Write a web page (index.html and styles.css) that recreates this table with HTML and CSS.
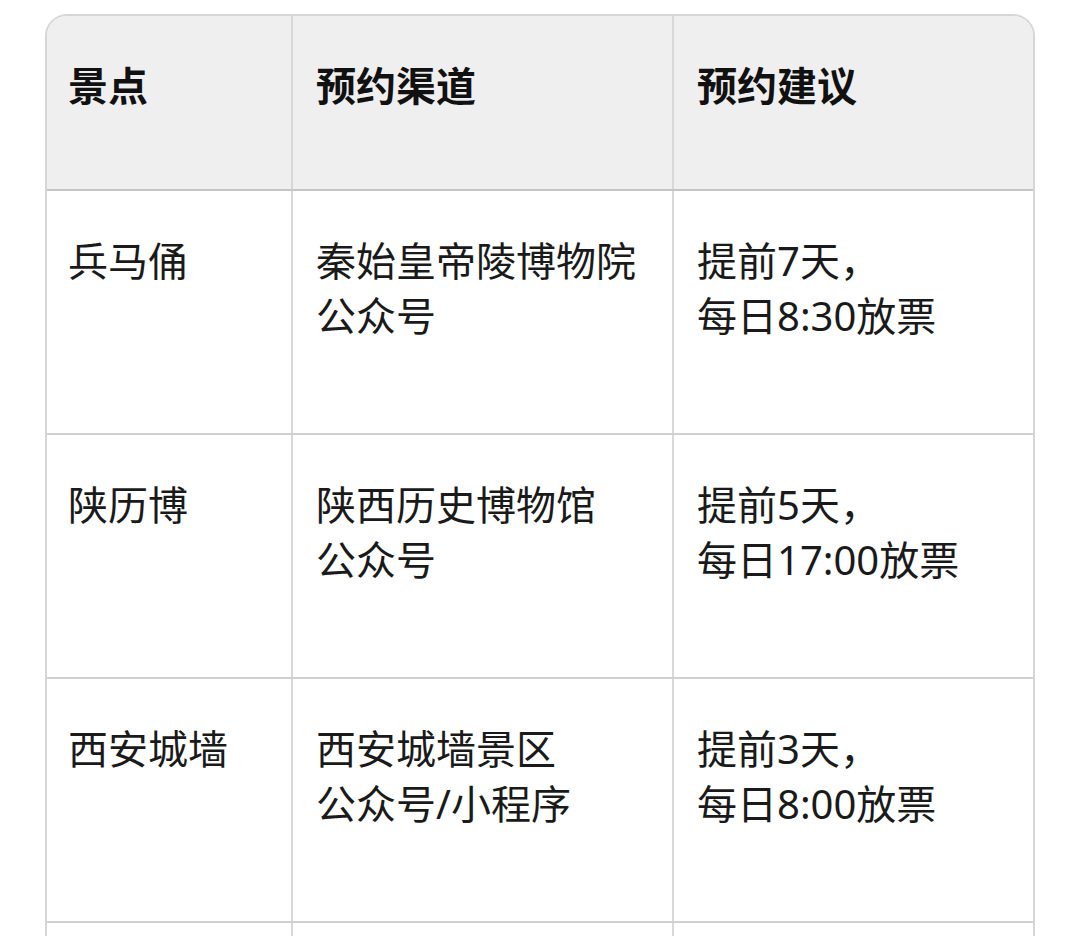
FILE: index.html
```html
<!DOCTYPE html>
<html lang="zh-CN">
<head>
<meta charset="utf-8">
<title>预约建议</title>
<link rel="stylesheet" href="styles.css">
</head>
<body>
<div class="card">
  <table class="tbl">
    <colgroup>
      <col class="c1">
      <col class="c2">
      <col class="c3">
    </colgroup>
    <thead>
      <tr class="head">
        <th>景点</th>
        <th>预约渠道</th>
        <th>预约建议</th>
      </tr>
    </thead>
    <tbody>
      <tr class="row">
        <td>兵马俑</td>
        <td>秦始皇帝陵博物院<br>公众号</td>
        <td>提前7天，<br>每日8:30放票</td>
      </tr>
      <tr class="row">
        <td>陕历博</td>
        <td>陕西历史博物馆<br>公众号</td>
        <td>提前5天，<br>每日17:00放票</td>
      </tr>
      <tr class="row">
        <td>西安城墙</td>
        <td>西安城墙景区<br>公众号/小程序</td>
        <td>提前3天，<br>每日8:00放票</td>
      </tr>
      <tr class="row">
        <td></td>
        <td></td>
        <td></td>
      </tr>
    </tbody>
  </table>
</div>
</body>
</html>
```
FILE: styles.css
```css
html, body {
  margin: 0;
  padding: 0;
  background: #ffffff;
}
body {
  font-family: "Noto Sans", "Noto Sans CJK SC", sans-serif;
  color: #1a1a1a;
  height: 936px;
  overflow: hidden;
}
.card {
  margin: 14px 0 0 45px;
  width: 990px;
  border: 2px solid #d6d6d6;
  border-bottom: none;
  border-radius: 22px 22px 0 0;
  overflow: hidden;
  box-sizing: border-box;
}
.tbl {
  width: 100%;
  border-collapse: collapse;
  table-layout: fixed;
}
.c1 { width: 245px; }
.c2 { width: 381px; }
.c3 { width: auto; }
.tbl th,
.tbl td {
  font-size: 40px;
  line-height: 55px;
  text-align: left;
  vertical-align: top;
  padding: 42px 10px 0 23px;
  border-left: 2px solid #d8d8d8;
}
.tbl th:first-child,
.tbl td:first-child {
  border-left: none;
  padding-left: 21px;
}
.head th {
  height: 131px;
  background: #efefef;
  font-weight: 700;
  color: #111;
  border-bottom: 2px solid #c4c4c4;
}
.row td {
  height: 200px;
  font-weight: 400;
  border-bottom: 2px solid #d0d0d0;
}
```
